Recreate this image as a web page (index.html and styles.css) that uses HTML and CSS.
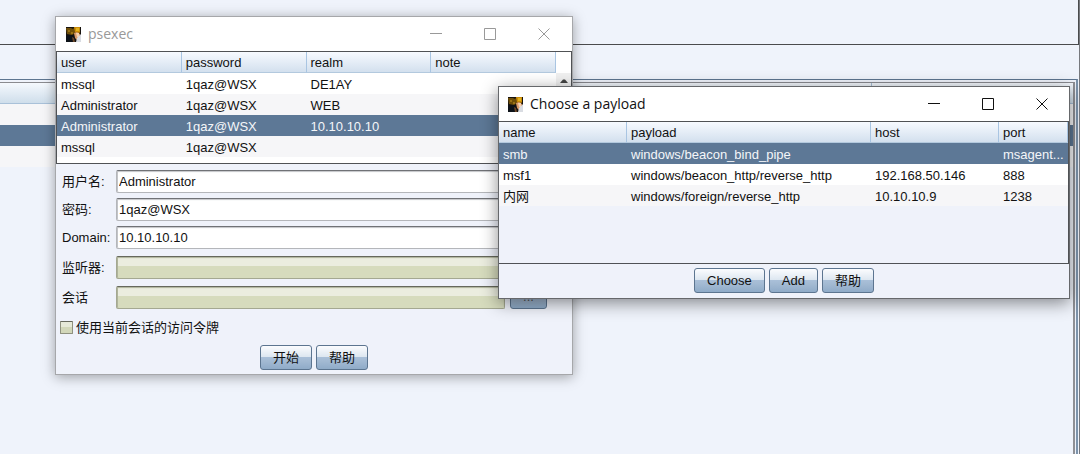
FILE: index.html
```html
<!DOCTYPE html>
<html lang="zh-CN">
<head>
<meta charset="utf-8">
<title>psexec</title>
<link rel="stylesheet" href="styles.css">
</head>
<body>
<svg class="defs" aria-hidden="true">
  <symbol id="app" viewBox="0 0 15 15">
    <rect width="15" height="15" fill="#17130f"/>
    <path d="M0 1h5l2 1 2-2h5v6H9L6 8 1 7z" fill="#6e4e08"/>
    <path d="M8 0h6v5l-2 1-3-1z" fill="#c98a08"/>
    <path d="M2 3h2v2H2zM5 5h2v2H5z" fill="#9a7214"/>
    <path d="M10 1h3v3h-3z" fill="#e3b31b"/>
    <path d="M8 6l3-1 3 2v5l-3 1-2-2z" fill="#d99a68"/>
    <path d="M10 6h3v4h-2z" fill="#f4cfae"/>
    <path d="M11 11l4-4v8h-5z" fill="#d9dce2"/>
    <path d="M0 9l7-1 2 4-1 3H0z" fill="#0d1218"/>
    <path d="M6 10l2 1 1 4H7z" fill="#6b4526"/>
  </symbol>
  <symbol id="min" viewBox="0 0 12 12"><path d="M0 5.5h12" stroke="currentColor"/></symbol>
  <symbol id="max" viewBox="0 0 12 12"><path d="M.5.5h11v11H.5z" fill="none" stroke="currentColor"/></symbol>
  <symbol id="close" viewBox="0 0 12 12"><path d="M.5.5l11 11M11.5.5l-11 11" stroke="currentColor"/></symbol>
</svg>

<main class="desktop">
  <section class="top-pane"></section>
  <section class="tab-pane">
    <div class="session-table">
      <div class="session-head"><span></span></div>
      <div class="session-row"></div>
      <div class="session-row selected"></div>
      <div class="session-row"></div>
    </div>
  </section>

  <section class="window psexec" aria-label="psexec">
    <header class="titlebar">
      <svg class="app-icon"><use href="#app"/></svg>
      <h1 class="title">psexec</h1>
      <button class="caption" aria-label="Minimize"><svg><use href="#min"/></svg></button>
      <button class="caption" aria-label="Maximize"><svg><use href="#max"/></svg></button>
      <button class="caption" aria-label="Close"><svg><use href="#close"/></svg></button>
    </header>
    <div class="viewport credentials">
      <table class="grid">
        <thead><tr><th>user</th><th>password</th><th>realm</th><th>note</th></tr></thead>
        <tbody>
          <tr><td>mssql</td><td>1qaz@WSX</td><td>DE1AY</td><td></td></tr>
          <tr><td>Administrator</td><td>1qaz@WSX</td><td>WEB</td><td></td></tr>
          <tr class="selected"><td>Administrator</td><td>1qaz@WSX</td><td>10.10.10.10</td><td></td></tr>
          <tr><td>mssql</td><td>1qaz@WSX</td><td></td><td></td></tr>
        </tbody>
      </table>
      <div class="scrollbar"><button class="scroll-up" aria-label="Scroll up"><svg viewBox="0 0 8 4"><path d="M0 4l3-3.500h2L8 4z" fill="#444"/></svg></button></div>
    </div>
    <form class="form">
      <div class="field"><label for="user">用户名:</label><input id="user" type="text" value="Administrator"></div>
      <div class="field"><label for="pass">密码:</label><input id="pass" type="text" value="1qaz@WSX"></div>
      <div class="field"><label for="domain">Domain:</label><input id="domain" type="text" value="10.10.10.10"></div>
      <div class="field picker"><label for="listener">监听器:</label><input id="listener" type="text" readonly><button class="button browse" type="button">...</button></div>
      <div class="field picker"><label for="session">会话</label><input id="session" type="text" readonly><button class="button browse" type="button">...</button></div>
      <label class="check"><input type="checkbox">使用当前会话的访问令牌</label>
      <div class="actions">
        <button class="button" type="button">开始</button>
        <button class="button" type="button">帮助</button>
      </div>
    </form>
  </section>

  <section class="window payload" aria-label="Choose a payload">
    <header class="titlebar">
      <svg class="app-icon"><use href="#app"/></svg>
      <h2 class="title">Choose a payload</h2>
      <button class="caption" aria-label="Minimize"><svg><use href="#min"/></svg></button>
      <button class="caption" aria-label="Maximize"><svg><use href="#max"/></svg></button>
      <button class="caption" aria-label="Close"><svg><use href="#close"/></svg></button>
    </header>
    <div class="viewport listeners">
      <table class="grid">
        <colgroup><col class="col-name"><col class="col-payload"><col class="col-host"><col class="col-port"></colgroup>
        <thead><tr><th>name</th><th>payload</th><th>host</th><th>port</th></tr></thead>
        <tbody>
          <tr class="selected"><td>smb</td><td>windows/beacon_bind_pipe</td><td></td><td>msagent...</td></tr>
          <tr><td>msf1</td><td>windows/beacon_http/reverse_http</td><td>192.168.50.146</td><td>888</td></tr>
          <tr><td>内网</td><td>windows/foreign/reverse_http</td><td>10.10.10.9</td><td>1238</td></tr>
        </tbody>
      </table>
    </div>
    <div class="actions">
      <button class="button" type="button">Choose</button>
      <button class="button" type="button">Add</button>
      <button class="button" type="button">帮助</button>
    </div>
  </section>
</main>
</body>
</html>
```
FILE: styles.css
```css
* { box-sizing: border-box; }

body {
  margin: 0;
  background: #eff3fb;
  color: #111;
  font: 13px/20px "Liberation Sans", "Noto Sans CJK SC", sans-serif;
}

button, input { font: inherit; color: inherit; }

.defs { position: absolute; width: 0; height: 0; }

.desktop {
  position: relative;
  display: flex;
  flex-direction: column;
  min-height: 100vh;
  overflow: hidden;
  border-right: 1px solid #77797e;
}

.top-pane {
  height: 45px;
  border-right: 1px solid #4a4b4d;
  border-bottom: 1px solid #4a4b4d;
}

.tab-pane {
  flex: 1;
  display: flex;
  margin: 34px 1px 0 0;
  padding: 2px 1px 0 0;
  border-top: 1px solid #5d7590;
  border-right: 2px solid #7c93ab;
}

.session-table {
  flex: 1;
  border-top: 1px solid #8a8b90;
  border-right: 2px solid #8f9095;
}

.session-head {
  display: flex;
  justify-content: flex-end;
  height: 21px;
  background: linear-gradient(#f5f9fe, #cfdeeb);
  border-bottom: 1px solid #a9c1d9;
}

.session-head span { width: 202px; border-left: 1px solid #a9c1d9; }

.session-row { height: 21px; background: #f6f6f8; }
.session-row.selected { background: #5d7896; }

/* Windows */
.window {
  position: absolute;
  border: 1px solid #a6a7aa;
  background: #eff2fa;
}

.psexec {
  top: 16px;
  left: 55px;
  right: 506px;
  box-shadow: 0 2px 12px rgba(0, 0, 0, .35);
}

.payload {
  top: 86px;
  left: 498px;
  right: 9px;
  border-color: #66686b;
  box-shadow: 0 4px 16px rgba(0, 0, 0, .45);
}

.titlebar {
  display: flex;
  align-items: center;
  height: 34px;
  padding-left: 9px;
  background: #fff;
  color: #111;
}

.psexec .titlebar { padding: 0 1px 0 10px; color: #999; }

.app-icon { width: 15px; height: 15px; }

.title {
  flex: 1;
  margin: 0 0 0 7px;
  font: 14px/20px "Open Sans", sans-serif;
}

.caption {
  display: grid;
  place-items: center;
  width: 54px;
  height: 34px;
  padding: 0;
  border: 0;
  background: none;
}

.caption svg { width: 12px; height: 12px; }

/* Tables */
.viewport {
  display: flex;
  align-items: flex-start;
  border: 1px solid #505255;
}

.credentials { height: 113px; background: #fff; }
.listeners { height: 143px; border-left-width: 0; }

.grid {
  flex: 1;
  width: 100%;
  table-layout: fixed;
  border-collapse: separate;
  border-spacing: 0;
}

.grid th, .grid td {
  height: 21px;
  padding: 3px 3px 0 4px;
  overflow: hidden;
  line-height: 18px;
  font-weight: normal;
  text-align: left;
  white-space: nowrap;
}

.grid th {
  padding-top: 1px;
  line-height: 19px;
  border-right: 1px solid #a9c5e2;
  border-bottom: 1px solid #b3c9de;
  background: linear-gradient(#f7faff, #d3e0ee);
}

.grid tbody tr { background: #fff; }
.credentials tbody tr:nth-child(even), .listeners tbody tr:nth-child(odd) { background: #f6f6f8; }
.grid tbody tr.selected { background: #5d7896; color: #f4f6f9; }

.col-name { width: 128px; }
.col-host { width: 128px; }
.col-port { width: 69px; }

.scrollbar { width: 15px; padding-top: 21px; }

.scroll-up {
  display: grid;
  place-items: center;
  width: 15px;
  height: 15px;
  padding: 0;
  border: 0;
  background: #f0f0f0;
}

.scroll-up svg { width: 8px; height: 4px; }

/* Form */
.form {
  display: flex;
  flex-direction: column;
  gap: 5px;
  padding: 6px 4px 0;
}

.field {
  display: grid;
  grid-template-columns: 54px 1fr 37px;
  align-items: end;
  margin-right: 21px;
  padding-left: 2px;
}

.field label { line-height: 22px; }

.field input {
  height: 23px;
  min-width: 0;
  margin-right: 5px;
  padding: 0 2px;
  border: 1px solid #b4b6ba;
  border-top-color: #707276;
  border-radius: 2px;
  background: #fff;
  box-shadow: inset 0 1px 1px #c4c5c8, inset 1px 0 #c4c5c8;
}

.field input[readonly] {
  border-color: #a4a891;
  border-top-color: #66685c;
  background: linear-gradient(#ebeddf 45%, #d6dbbd 45%);
  box-shadow: inset 0 1px 1px #b0b49c, inset 1px 0 #b0b49c;
}

.picker { height: 25px; }

.check {
  display: flex;
  align-items: center;
  gap: 3px;
  height: 26px;
  padding-top: 1px;
}

.check input {
  appearance: none;
  width: 13px;
  height: 13px;
  margin: 0;
  border: 1px solid #8f917f;
  border-top-color: #66685c;
  border-radius: 1px;
  background: linear-gradient(#e6e9d8 45%, #d2d7b9 45%);
}

.check input:checked { background: #5d7896; }

.actions {
  display: flex;
  justify-content: center;
  gap: 4px;
  padding: 4px 0 5px;
}

.form .actions { padding: 0 0 4px; }

.button {
  height: 25px;
  padding: 0 12px;
  border: 1px solid #5c7590;
  border-radius: 3px;
  background: linear-gradient(#fbfcfe, #dce6f0 48%, #a9bfd8 49%, #a3bad3 65%, #8fabc8);
  line-height: 20px;
}

.browse { padding: 0; color: #555; }
```
